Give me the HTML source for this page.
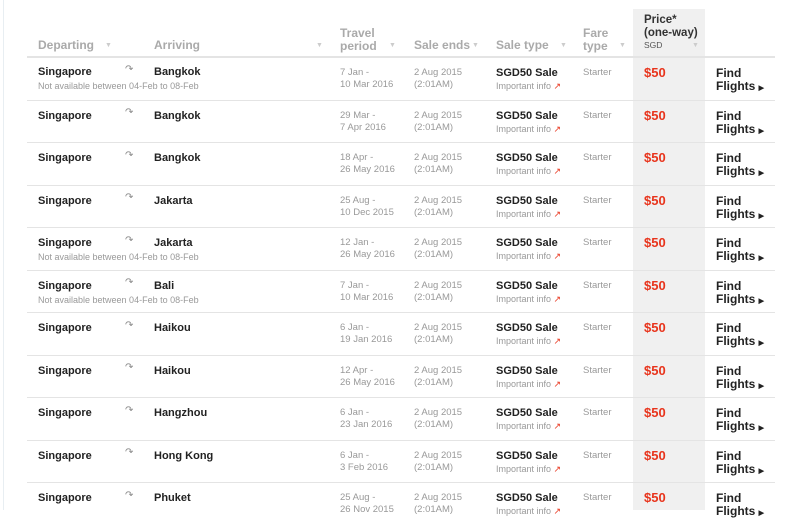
<!DOCTYPE html><html><head><style>
body{margin:0;width:800px;height:510px;overflow:hidden;background:#fff;font-family:"Liberation Sans",Arial,sans-serif;position:relative}
.a{position:absolute;white-space:nowrap}
.h{font-size:12px;font-weight:bold;color:#aaa;line-height:13px}
.c{position:absolute;font-size:7px;color:#ccc}
.n{font-size:11px;font-weight:bold;color:#222;line-height:13px}
.s{font-size:9px;color:#999;line-height:12px}
.t{font-size:9.5px;color:#999;line-height:12px}
.p{font-size:13px;font-weight:bold;color:#e8341c}
.f{font-size:12px;font-weight:bold;color:#222;line-height:13px}
.ln{position:absolute;left:27px;width:748px;height:1px;background:#e4e4e4}
.ar{font-size:10px;color:#888}
.ii{color:#999;font-size:9px;font-weight:normal}.ii b{color:#e8341c;font-weight:normal}
</style></head><body>
<div style="position:absolute;left:3px;top:0;width:1px;height:510px;background:#e8eef2"></div>
<div style="position:absolute;left:633px;top:9px;width:72px;height:501px;background:#f0f0f0"></div>
<div class="a h" style="left:38px;top:39px">Departing</div><div class="c" style="left:105px;top:42px">▼</div>
<div class="a h" style="left:154px;top:39px">Arriving</div><div class="c" style="left:316px;top:42px">▼</div>
<div class="a h" style="left:340px;top:27px">Travel<br>period</div><div class="c" style="left:389px;top:42px">▼</div>
<div class="a h" style="left:414px;top:39px">Sale ends</div><div class="c" style="left:472px;top:42px">▼</div>
<div class="a h" style="left:496px;top:39px">Sale type</div><div class="c" style="left:560px;top:42px">▼</div>
<div class="a h" style="left:583px;top:27px">Fare<br>type</div><div class="c" style="left:619px;top:42px">▼</div>
<div class="a h" style="left:644px;top:14px;color:#333;font-size:11.5px">Price*<br>(one-way)</div><div class="a" style="left:644px;top:40px;font-size:8.5px;color:#555">SGD</div><div class="c" style="left:692px;top:42px">▼</div>
<div class="ln" style="top:56px;height:2px"></div>

<div class="a n" style="left:38px;top:66px">Singapore</div><div class="a ar" style="left:125px;top:64px">↷</div><div class="a n" style="left:154px;top:66px">Bangkok</div><div class="a s" style="left:38px;top:80px">Not available between 04-Feb to 08-Feb</div><div class="a t" style="left:340px;top:67px">7 Jan -<br>10 Mar 2016</div><div class="a t" style="left:414px;top:67px">2 Aug 2015<br>(2:01AM)</div><div class="a n" style="left:496px;top:67px">SGD50 Sale<br><span class="ii">Important info <b>↗</b></span></div><div class="a t" style="left:583px;top:67px">Starter</div><div class="a p" style="left:644px;top:65px">$50</div><div class="a f" style="left:716px;top:67px">Find<br>Flights <span style="font-size:7px">▶</span></div><div class="ln" style="top:100px"></div>

<div class="a n" style="left:38px;top:110px">Singapore</div><div class="a ar" style="left:125px;top:107px">↷</div><div class="a n" style="left:154px;top:110px">Bangkok</div><div class="a t" style="left:340px;top:110px">29 Mar -<br>7 Apr 2016</div><div class="a t" style="left:414px;top:110px">2 Aug 2015<br>(2:01AM)</div><div class="a n" style="left:496px;top:110px">SGD50 Sale<br><span class="ii">Important info <b>↗</b></span></div><div class="a t" style="left:583px;top:110px">Starter</div><div class="a p" style="left:644px;top:108px">$50</div><div class="a f" style="left:716px;top:110px">Find<br>Flights <span style="font-size:7px">▶</span></div><div class="ln" style="top:142px"></div>

<div class="a n" style="left:38px;top:152px">Singapore</div><div class="a ar" style="left:125px;top:150px">↷</div><div class="a n" style="left:154px;top:152px">Bangkok</div><div class="a t" style="left:340px;top:152px">18 Apr -<br>26 May 2016</div><div class="a t" style="left:414px;top:152px">2 Aug 2015<br>(2:01AM)</div><div class="a n" style="left:496px;top:152px">SGD50 Sale<br><span class="ii">Important info <b>↗</b></span></div><div class="a t" style="left:583px;top:152px">Starter</div><div class="a p" style="left:644px;top:150px">$50</div><div class="a f" style="left:716px;top:152px">Find<br>Flights <span style="font-size:7px">▶</span></div><div class="ln" style="top:185px"></div>

<div class="a n" style="left:38px;top:195px">Singapore</div><div class="a ar" style="left:125px;top:192px">↷</div><div class="a n" style="left:154px;top:195px">Jakarta</div><div class="a t" style="left:340px;top:195px">25 Aug -<br>10 Dec 2015</div><div class="a t" style="left:414px;top:195px">2 Aug 2015<br>(2:01AM)</div><div class="a n" style="left:496px;top:195px">SGD50 Sale<br><span class="ii">Important info <b>↗</b></span></div><div class="a t" style="left:583px;top:195px">Starter</div><div class="a p" style="left:644px;top:193px">$50</div><div class="a f" style="left:716px;top:195px">Find<br>Flights <span style="font-size:7px">▶</span></div><div class="ln" style="top:227px"></div>

<div class="a n" style="left:38px;top:237px">Singapore</div><div class="a ar" style="left:125px;top:235px">↷</div><div class="a n" style="left:154px;top:237px">Jakarta</div><div class="a s" style="left:38px;top:251px">Not available between 04-Feb to 08-Feb</div><div class="a t" style="left:340px;top:237px">12 Jan -<br>26 May 2016</div><div class="a t" style="left:414px;top:237px">2 Aug 2015<br>(2:01AM)</div><div class="a n" style="left:496px;top:237px">SGD50 Sale<br><span class="ii">Important info <b>↗</b></span></div><div class="a t" style="left:583px;top:237px">Starter</div><div class="a p" style="left:644px;top:235px">$50</div><div class="a f" style="left:716px;top:237px">Find<br>Flights <span style="font-size:7px">▶</span></div><div class="ln" style="top:270px"></div>

<div class="a n" style="left:38px;top:280px">Singapore</div><div class="a ar" style="left:125px;top:277px">↷</div><div class="a n" style="left:154px;top:280px">Bali</div><div class="a s" style="left:38px;top:294px">Not available between 04-Feb to 08-Feb</div><div class="a t" style="left:340px;top:280px">7 Jan -<br>10 Mar 2016</div><div class="a t" style="left:414px;top:280px">2 Aug 2015<br>(2:01AM)</div><div class="a n" style="left:496px;top:280px">SGD50 Sale<br><span class="ii">Important info <b>↗</b></span></div><div class="a t" style="left:583px;top:280px">Starter</div><div class="a p" style="left:644px;top:278px">$50</div><div class="a f" style="left:716px;top:280px">Find<br>Flights <span style="font-size:7px">▶</span></div><div class="ln" style="top:312px"></div>

<div class="a n" style="left:38px;top:322px">Singapore</div><div class="a ar" style="left:125px;top:320px">↷</div><div class="a n" style="left:154px;top:322px">Haikou</div><div class="a t" style="left:340px;top:322px">6 Jan -<br>19 Jan 2016</div><div class="a t" style="left:414px;top:322px">2 Aug 2015<br>(2:01AM)</div><div class="a n" style="left:496px;top:322px">SGD50 Sale<br><span class="ii">Important info <b>↗</b></span></div><div class="a t" style="left:583px;top:322px">Starter</div><div class="a p" style="left:644px;top:320px">$50</div><div class="a f" style="left:716px;top:322px">Find<br>Flights <span style="font-size:7px">▶</span></div><div class="ln" style="top:355px"></div>

<div class="a n" style="left:38px;top:365px">Singapore</div><div class="a ar" style="left:125px;top:362px">↷</div><div class="a n" style="left:154px;top:365px">Haikou</div><div class="a t" style="left:340px;top:365px">12 Apr -<br>26 May 2016</div><div class="a t" style="left:414px;top:365px">2 Aug 2015<br>(2:01AM)</div><div class="a n" style="left:496px;top:365px">SGD50 Sale<br><span class="ii">Important info <b>↗</b></span></div><div class="a t" style="left:583px;top:365px">Starter</div><div class="a p" style="left:644px;top:363px">$50</div><div class="a f" style="left:716px;top:365px">Find<br>Flights <span style="font-size:7px">▶</span></div><div class="ln" style="top:397px"></div>

<div class="a n" style="left:38px;top:407px">Singapore</div><div class="a ar" style="left:125px;top:405px">↷</div><div class="a n" style="left:154px;top:407px">Hangzhou</div><div class="a t" style="left:340px;top:407px">6 Jan -<br>23 Jan 2016</div><div class="a t" style="left:414px;top:407px">2 Aug 2015<br>(2:01AM)</div><div class="a n" style="left:496px;top:407px">SGD50 Sale<br><span class="ii">Important info <b>↗</b></span></div><div class="a t" style="left:583px;top:407px">Starter</div><div class="a p" style="left:644px;top:405px">$50</div><div class="a f" style="left:716px;top:407px">Find<br>Flights <span style="font-size:7px">▶</span></div><div class="ln" style="top:440px"></div>

<div class="a n" style="left:38px;top:450px">Singapore</div><div class="a ar" style="left:125px;top:447px">↷</div><div class="a n" style="left:154px;top:450px">Hong Kong</div><div class="a t" style="left:340px;top:450px">6 Jan -<br>3 Feb 2016</div><div class="a t" style="left:414px;top:450px">2 Aug 2015<br>(2:01AM)</div><div class="a n" style="left:496px;top:450px">SGD50 Sale<br><span class="ii">Important info <b>↗</b></span></div><div class="a t" style="left:583px;top:450px">Starter</div><div class="a p" style="left:644px;top:448px">$50</div><div class="a f" style="left:716px;top:450px">Find<br>Flights <span style="font-size:7px">▶</span></div><div class="ln" style="top:482px"></div>

<div class="a n" style="left:38px;top:492px">Singapore</div><div class="a ar" style="left:125px;top:490px">↷</div><div class="a n" style="left:154px;top:492px">Phuket</div><div class="a t" style="left:340px;top:492px">25 Aug -<br>26 Nov 2015</div><div class="a t" style="left:414px;top:492px">2 Aug 2015<br>(2:01AM)</div><div class="a n" style="left:496px;top:492px">SGD50 Sale<br><span class="ii">Important info <b>↗</b></span></div><div class="a t" style="left:583px;top:492px">Starter</div><div class="a p" style="left:644px;top:490px">$50</div><div class="a f" style="left:716px;top:492px">Find<br>Flights <span style="font-size:7px">▶</span></div>
</body></html>
